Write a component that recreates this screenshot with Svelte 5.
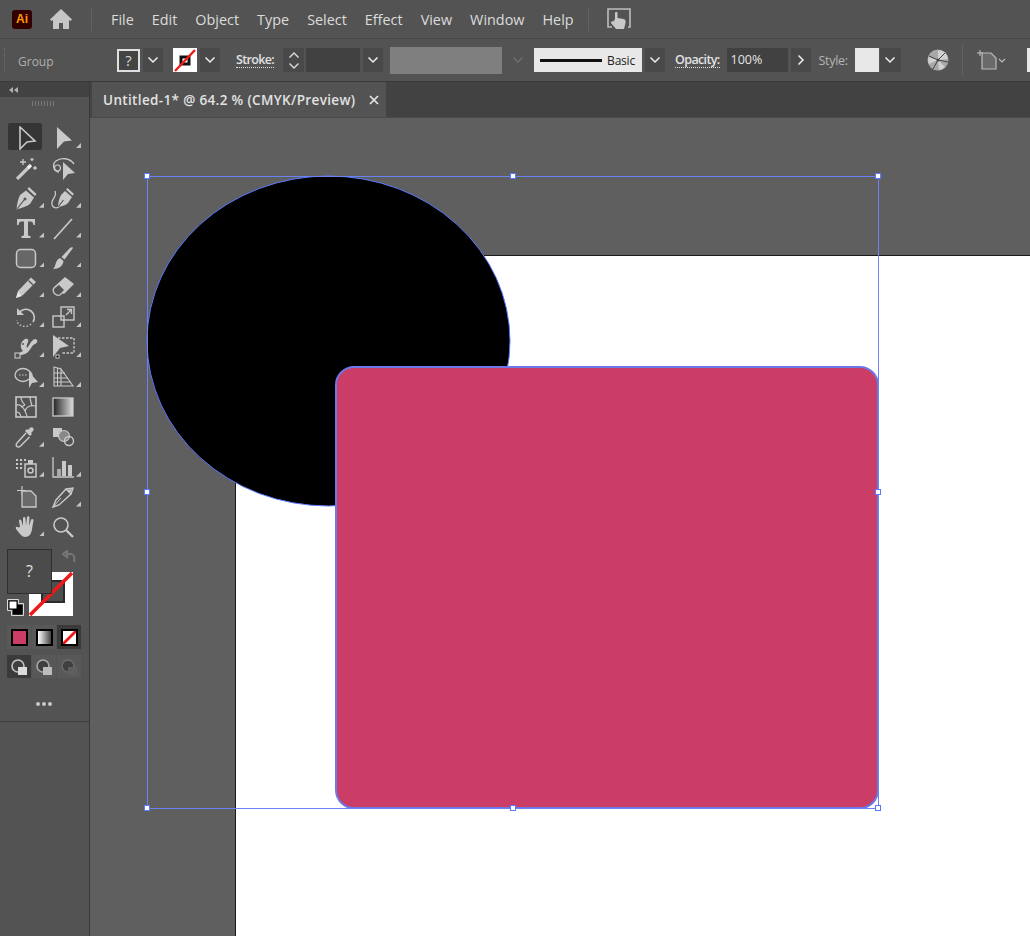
<script>
  const menus = ['File', 'Edit', 'Object', 'Type', 'Select', 'Effect', 'View', 'Window', 'Help'];

  // each tool is [svg body on a 24x24 box, has flyout corner]
  const tools = [
    ['<path d="M6 1 21 15 13 16 6 23Z" fill="none" stroke-width="1.6"/>', false],
    ['<path d="M6 1 21 14.500 13 15.500 6 23Z" fill="#c9c9c9" stroke="none"/>', true],
    ['<path d="M3 23 15 11" stroke-width="3.200"/><path d="M9 3v6M6 6h6M18 2v3M16.500 3.500h3M21 10v4M19 12h4" stroke-width="1.300"/><path d="M14 12l3-3" stroke-width="3.200" stroke="#f2f2f2"/>', false],
    ['<path d="M8 16C2 15 1 8 5 5c5-4 14-3 18 3" fill="none" stroke-width="1.400"/><circle cx="6.500" cy="12" r="3" fill="none" stroke-width="1.200"/><path d="M12 6 24 17 17 18 12 24Z" fill="#c9c9c9" stroke="none"/>', false],
    ['<path d="M12 4.500 20 11.500 16 18C12 21 7 22 2.500 23.500 3 18 4 13 6 9Z" fill="#c9c9c9" stroke="none"/><path d="M3 23 10 14" stroke="#535353" stroke-width="1.200"/><circle cx="11" cy="13" r="1.500" fill="#535353" stroke="none"/><path d="M13.500 3 15 1 22.500 8 21 10Z" fill="#c9c9c9" stroke="none"/>', true],
    ['<path d="M14 5 21 11 17 17C14 20 11 20 7 21 7 17 8 13 10 9Z" fill="#c9c9c9" stroke="none"/><path d="M7 21 12.500 14" stroke="#535353" stroke-width="1.100"/><path d="M15 3.500 16.500 2 23 8 21.500 9.500Z" fill="#c9c9c9" stroke="none"/><path d="M8 21C4 23 0 21 1 16 2 11 6 11 4 5" fill="none" stroke-width="1.300"/>', true],
    ['<path d="M3 3h18v6h-1.500c-.5-2.500-1-3.500-3-3.500H14v13c0 1 1 1.500 2.500 1.500v2h-9v-2C9 20 10 19.500 10 18.500v-13H7.500c-2 0-2.500 1-3 3.500H3Z" fill="#c9c9c9" stroke="none"/>', true],
    ['<path d="M3 23 21 3" stroke-width="1.700"/>', true],
    ['<rect x="2.500" y="3.500" width="19" height="18" rx="4" fill="#676767" stroke-width="1.500"/>', true],
    ['<path d="M22 2 13.500 13.500 10.500 11 19 2C20 1 22 1 22 2Z" fill="#c9c9c9" stroke="none"/><path d="M9 12 12.500 15C12 20 8 23 2 23 5 21 4 14 9 12Z" fill="#c9c9c9" stroke="none"/>', true],
    ['<path d="M17 2.500 22 7 9 20 2 23 4 16Z" fill="#c9c9c9" stroke="none"/><path d="M14.500 5.500l4.500 4.500" stroke="#535353" stroke-width="1.200"/><path d="M2 23l2-6 4 4z" fill="#e8e8e8" stroke="none"/>', true],
    ['<path d="M14 2 23 9 13 19 7 16 3 12Z" fill="#c9c9c9" stroke="none"/><path d="M3 13 8 9 14 15 9 20C7 21 5 20 3 18 2 16 2 14 3 13Z" fill="#535353" stroke="#c9c9c9" stroke-width="1.300"/>', true],
    ['<path d="M4 9C7 4 13 3 17 6c4 3 4 8 2 11" fill="none" stroke-width="1.600"/><path d="M3 3v7h7z" fill="#c9c9c9" stroke="none"/><path d="M17 19c-3 3-8 3-11 1-2-1-3-3-3-5" fill="none" stroke-width="1.400" stroke-dasharray="1.500 2"/>', true],
    ['<rect x="10" y="2" width="13" height="13" fill="none" stroke-width="1.400"/><rect x="2" y="11" width="11" height="11" fill="none" stroke-width="1.400"/><path d="M15 10l5-5M16 4.500h4.500V9" fill="none" stroke-width="1.300"/>', true],
    ['<path d="M3 21C6 17 7 17 9 16 5 12 7 6 11 4 13 3 15 4 14 7 13 9 12 12 13 13 16 10 17 5 21 4 24 4 24 8 21 9 18 10 17 14 14 17 11 20 6 20 3 21Z" fill="#c9c9c9" stroke="none"/><rect x="1" y="18" width="5" height="5" fill="#535353" stroke-width="1.100"/><circle cx="9" cy="9" r="1" fill="#535353" stroke="none"/>', true],
    ['<path d="M7 3h16v15H10" fill="none" stroke-width="1.300" stroke-dasharray="2.500 1.500"/><path d="M2 0 18 11 9 13 2 22Z" fill="#c9c9c9" stroke="none"/><rect x="5" y="20" width="3" height="3" stroke-width="1"/>', true],
    ['<ellipse cx="9" cy="10" rx="8" ry="6.500" fill="none" stroke-width="1.300"/><path d="M15 6a6 6 0 0 1 3 6" fill="none" stroke-width="1.300"/><path d="M5 10h8" stroke-width="1.200" stroke-dasharray="1.500 1.500"/><path d="M15 7 24 17 18 18 15 23Z" fill="#c9c9c9" stroke="none"/>', true],
    ['<path d="M3 2 10 4V21H3ZM10 4 22 21H10Z" fill="none" stroke-width="1.100"/><path d="M3 8h11M3 13h14M3 17h17M6.500 3v18" fill="none" stroke-width="1"/>', true],
    ['<rect x="2" y="2" width="20" height="20" fill="none" stroke-width="1.600"/><path d="M2 10c5-1 7 2 9 6s2 5 2 6M11 16c1-4 4-6 11-5M7 2c0 4 2 6 4 8M16 2c0 3 1 5 2 9M2 17c3 0 4 1 5 5M11 10c-2 1-3 2-4 2" fill="none" stroke-width="1.200"/>', false],
    ['<rect x="2" y="3" width="20" height="18" fill="url(#grad)" stroke-width="1.300"/>', false],
    ['<path d="M16 3c2-2 5 1 3 3l-2 2 1 1-2 2-5-5 2-2 1 1Z" fill="#c9c9c9" stroke="none"/><path d="M12 8 3 18c-1 1-1 3 0 3.500 1 1 2.500.5 3.500-.5l9-9" fill="none" stroke-width="1.500"/>', true],
    ['<rect x="2" y="3" width="9" height="9" fill="#c9c9c9" stroke="none"/><circle cx="13" cy="11" r="5.500" fill="#888" stroke-width="1.200"/><circle cx="18" cy="16" r="4.500" fill="none" stroke-width="1.400"/>', false],
    ['<path d="M2 5h2M6 5h2M10 5h2M2 9h2M6 9h2M2 13h2M6 13h2" stroke-width="2"/><rect x="11" y="9" width="11" height="13" fill="none" stroke-width="1.500"/><rect x="14" y="5" width="5" height="4" fill="#c9c9c9" stroke="none"/><circle cx="16.500" cy="15.500" r="2.500" fill="none" stroke-width="1.500"/>', true],
    ['<path d="M2 2v20h21" fill="none" stroke-width="1.300"/><rect x="6" y="14" width="4" height="7" fill="#aaa" stroke="none"/><rect x="11" y="6" width="4" height="15" fill="#c9c9c9" stroke="none"/><rect x="17" y="10" width="4" height="11" fill="#c9c9c9" stroke="none"/>', true],
    ['<path d="M8 1v9M3 5.500h9" stroke-width="1.200"/><path d="M8 6h9l5 5v11H8Z" fill="#6a6a6a" stroke-width="1.300"/>', false],
    ['<path d="M15 4 22 3 20 9 8 20 2 22 5 15Z" fill="none" stroke-width="1.400"/><path d="M15 4l5 5" stroke-width="1.400"/><path d="M2 22l8-9" stroke-width="1"/><path d="M16 5 21 4 19 8Z" fill="#c9c9c9" stroke="none"/>', true],
    ['<path d="M6 12 5 6c0-2 2-2 2.500 0L9 11 9 3.500c0-2 2.500-2 2.500 0L12 10.500l1-8c.3-2 2.500-1.500 2.500 0L15 11l2-6c.5-2 3-1 2.500.5L18 14c-.5 4-2 8-7 8-3 0-5-3-9-8-1-2 1-3 2.500-1.500Z" fill="#c9c9c9" stroke="none"/>', true],
    ['<circle cx="10" cy="10" r="7" fill="none" stroke-width="1.600"/><path d="M15 15 22 22" stroke-width="2.400"/>', false]
  ];

  const handles = [
    [147, 176], [513, 176], [878, 176],
    [147, 492], [878, 492],
    [147, 808], [513, 808], [878, 808]
  ];
</script>

<div class="app">
  <header class="menubar">
    <span class="logo">Ai</span>
    <svg class="home" viewBox="0 0 24 22" width="24" height="22" aria-hidden="true">
      <path d="M12 1 1 11.500 2.500 13 4 12v9h6v-6h4v6h6v-9l1.500 1 1.500-1.500Z" fill="#c6c6c6" />
    </svg>
    <span class="sep first"></span>
    <nav class="menus">
      {#each menus as m}
        <span>{m}</span>
      {/each}
    </nav>
    <span class="sep"></span>
    <svg class="touch" viewBox="0 0 24 22" width="24" height="22" aria-hidden="true">
      <path d="M5 19H1V1h22v18h-2" fill="none" stroke="#bdbdbd" stroke-width="1.600" />
      <path d="M8 11V5c0-1.500 2.500-1.500 2.500 0v5l6 1c2 .5 2.500 2 2 4l-1.500 6H9l-5-6c-.5-1 1-2.500 2.500-1.500Z" fill="#c9c9c9" />
    </svg>
  </header>

  <div class="controlbar">
    <span class="grip"></span>
    <span class="group">Group</span>
    <span class="fillq">?</span>
    <button class="chev">{@render chevron()}</button>
    <span class="strokeswatch">
      <svg viewBox="0 0 24 24" width="24" height="24" aria-hidden="true">
        <rect x="8" y="9" width="8" height="7" fill="none" stroke="#111" stroke-width="3" />
        <path d="M2 23 22 2" stroke="#f01818" stroke-width="2.400" />
      </svg>
    </span>
    <button class="chev">{@render chevron()}</button>
    <span class="lbl stroke-lbl">Stroke:</span>
    <span class="stepper">
      <svg viewBox="0 0 12 8" width="12" height="8" aria-hidden="true"><path d="M1.500 6.500 6 2l4.500 4.500" fill="none" stroke="#ddd" stroke-width="1.400" /></svg>
      <svg viewBox="0 0 12 8" width="12" height="8" aria-hidden="true"><path d="M1.500 1.500 6 6l4.500-4.500" fill="none" stroke="#ddd" stroke-width="1.400" /></svg>
    </span>
    <span class="input strokeinput"></span>
    <button class="chev">{@render chevron()}</button>
    <span class="greybox"></span>
    <span class="dimchev">
      <svg viewBox="0 0 12 8" width="12" height="8" aria-hidden="true"><path d="M1.500 1.500 6 6l4.500-4.500" fill="none" stroke="#6e6e6e" stroke-width="1.400" /></svg>
    </span>
    <span class="basic"><i></i><b>Basic</b></span>
    <button class="chev">{@render chevron()}</button>
    <span class="lbl opacity-lbl">Opacity:</span>
    <span class="input opacityinput">100%</span>
    <button class="chev next">
      <svg viewBox="0 0 8 12" width="8" height="12" aria-hidden="true"><path d="M1.500 1.500 6 6l-4.500 4.500" fill="none" stroke="#eee" stroke-width="1.500" /></svg>
    </button>
    <span class="style-lbl">Style:</span>
    <span class="styleswatch"></span>
    <button class="chev stylechev">{@render chevron()}</button>
    <svg class="recolor" viewBox="0 0 22 22" width="22" height="22" aria-hidden="true">
      <circle cx="11" cy="11" r="10.500" fill="#a8a8a8" />
      <path d="M11 11 11 1A10 10 0 0 1 21 10ZM11 11 18 18A10 10 0 0 1 12 21ZM11 11 2 15A10 10 0 0 1 1.500 8Z" fill="#d0d0d0" />
      <path d="M11 11 18 4M11 11 21 13M11 11 6 20M11 11 2 7" stroke="#444" stroke-width="1" />
      <circle cx="11" cy="11" r="1.500" fill="#444" />
    </svg>
    <span class="sep tall"></span>
    <svg class="doc" viewBox="0 0 30 20" width="30" height="20" aria-hidden="true">
      <path d="M3 0v6M0 3h6" stroke="#c4c4c4" stroke-width="1" />
      <path d="M5 3h9l5 5v11H5Z" fill="#6a6a6a" stroke="#bcbcbc" stroke-width="1.200" />
      <path d="M22 9l3 3 3-3" fill="none" stroke="#bcbcbc" stroke-width="1.100" />
    </svg>
    <span class="edgebox"></span>
  </div>

  <div class="workspace">
    <aside class="toolbar">
      <div class="collapse">
        <svg viewBox="0 0 9 6" width="9" height="6" aria-hidden="true"><path d="M4 0v6L0 3ZM9 0v6L5 3Z" fill="#b0b0b0" /></svg>
      </div>
      <div class="dragdots"></div>
      <div class="tools">
        {#each tools as [body, corner], i}
          <div class="tool" class:active={i === 0}>
            <svg viewBox="0 0 24 24" width="24" height="24" stroke="#c9c9c9" aria-hidden="true">
              {#if i === 19}
                <defs>
                  <linearGradient id="grad"><stop offset="0" stop-color="#222" /><stop offset="1" stop-color="#ddd" /></linearGradient>
                </defs>
              {/if}
              {@html body}
            </svg>
            {#if corner}<span class="corner"></span>{/if}
          </div>
        {/each}
      </div>

      <div class="swatches">
        <svg class="swap" viewBox="0 0 14 14" width="14" height="14" aria-hidden="true">
          <path d="M1 4 5 1v6ZM5 4h4c3 0 4 3 3 8" fill="none" stroke="#767676" stroke-width="2" />
        </svg>
        <div class="strokebox">
          <span class="hole"></span>
          <svg viewBox="0 0 44 44" width="44" height="44" aria-hidden="true"><path d="M1 43 43 1" stroke="#f01818" stroke-width="3.500" /></svg>
        </div>
        <div class="fillbox">?</div>
        <svg class="defaults" viewBox="0 0 17 17" width="17" height="17" aria-hidden="true">
          <path d="M.5.5h11v4h5v12h-12v-5h-4Z" fill="none" stroke="#dcdcdc" />
          <rect x="6" y="6" width="9.500" height="9.500" fill="#000" />
          <rect x="2" y="2" width="8" height="8" fill="#fff" stroke="#000" />
        </svg>
      </div>

      <div class="modes">
        <span class="mode"><i class="solid"></i></span>
        <span class="mode"><i class="gradient"></i></span>
        <span class="mode on">
          <i class="none">
            <svg viewBox="0 0 13 13" width="13" height="13" aria-hidden="true"><path d="M0 13 13 0" stroke="#f01818" stroke-width="2.800" /></svg>
          </i>
        </span>
      </div>

      <div class="drawmodes">
        <span class="draw on">{@render drawicon('#c4c4c4', '#dcdcdc')}</span>
        <span class="draw">{@render drawicon('#a8a8a8', '#bcbcbc')}</span>
        <span class="draw">{@render drawicon('#6a6a6a', '#5e5e5e')}</span>
      </div>

      <div class="more"><i></i><i></i><i></i></div>
      <div class="rule"></div>
    </aside>

    <main class="document">
      <div class="tabs">
        <div class="tab">
          <span>Untitled-1* @ 64.2 % (CMYK/Preview)</span>
          <svg viewBox="0 0 10 10" width="10" height="10" aria-hidden="true"><path d="M1 1 9 9M9 1 1 9" stroke="#e6e6e6" stroke-width="1.700" /></svg>
        </div>
      </div>
      <div class="canvas">
        <svg viewBox="90 118 940 818" width="940" height="818" aria-hidden="true">
          <rect x="235.500" y="255.500" width="900" height="800" fill="#fff" stroke="#1a1a1a" />
          <ellipse cx="328.500" cy="341" rx="181.500" ry="165" fill="#000" stroke="#5a78ff" stroke-width="1" />
          <rect x="336" y="367" width="542" height="441" rx="18" fill="#cb3c66" stroke="#6b78e6" stroke-width="2" />
          <rect x="147.500" y="176.500" width="731" height="632" fill="none" stroke="#6a82f5" stroke-width="1" />
          {#each handles as [x, y]}
            <rect x={x - 2.5} y={y - 2.5} width="5" height="5" fill="#fff" stroke="#5a78ff" stroke-width="1" />
          {/each}
        </svg>
      </div>
    </main>
  </div>
</div>

{#snippet chevron()}
  <svg viewBox="0 0 12 8" width="12" height="8" aria-hidden="true"><path d="M1.500 1.500 6 6l4.500-4.500" fill="none" stroke="#eee" stroke-width="1.500" /></svg>
{/snippet}

{#snippet drawicon(ring, square)}
  <svg viewBox="0 0 18 18" width="18" height="18" aria-hidden="true">
    <circle cx="8" cy="8" r="6" fill="#3f3f3f" stroke={ring} stroke-width="1.600" />
    <rect x="8" y="9" width="9" height="8" fill={square} />
  </svg>
{/snippet}

<style>
  :global(body) {
    background: #535353;
  }

  .app {
    width: 1030px;
    height: 936px;
    overflow: hidden;
    display: flex;
    flex-direction: column;
    background: #535353;
    font-family: "Open Sans", "Noto Sans", sans-serif;
    color: #d8d8d8;
  }

  .menubar {
    height: 38px;
    flex: none;
    display: flex;
    align-items: center;
    padding-left: 12px;
    border-bottom: 1px solid #464646;
    box-sizing: content-box;
  }

  .logo {
    width: 20px;
    height: 19px;
    border-radius: 3px;
    background: #330000;
    color: #ff9a00;
    font-size: 12px;
    font-weight: 700;
    line-height: 19px;
    text-align: center;
    font-family: "Liberation Sans", sans-serif;
  }

  .home {
    margin-left: 17px;
  }

  .sep {
    width: 1px;
    height: 24px;
    background: #626262;
    margin: 0 18px 0 14px;
  }

  .sep.first {
    margin-left: 18px;
    margin-right: 19px;
  }

  .menus {
    display: flex;
    gap: 18px;
    font-size: 14.400px;
    color: #dcdcdc;
  }

  .controlbar {
    height: 42px;
    flex: none;
    display: flex;
    align-items: center;
    position: relative;
    border-bottom: 1px solid #3a3a3a;
    font-size: 12px;
  }

  .grip {
    width: 2px;
    height: 24px;
    margin-left: 4px;
    border-left: 1px dotted #6d6d6d;
  }

  .group {
    margin-left: 11px;
    width: 99px;
    padding-top: 2px;
    font-size: 12px;
    color: #b0b0b0;
  }

  .fillq {
    width: 19px;
    height: 19px;
    border: 2px solid #e0e0e0;
    background: #444;
    color: #d8d8d8;
    font-size: 15px;
    line-height: 19px;
    text-align: center;
  }

  .chev {
    width: 20px;
    height: 24px;
    margin: 0 0 0 3px;
    padding: 0;
    border: 0;
    background: #494949;
    display: flex;
    align-items: center;
    justify-content: center;
  }

  .strokeswatch {
    width: 24px;
    height: 24px;
    margin-left: 10px;
    background: #fff;
  }

  .strokeswatch svg {
    display: block;
  }

  .lbl {
    font-size: 12.500px;
    font-weight: 600;
    letter-spacing: -0.65px;
    color: #e2e2e2;
    border-bottom: 1px dotted #e2e2e2;
    line-height: 15px;
  }

  .stroke-lbl {
    margin-left: 16px;
  }

  .stepper {
    width: 21px;
    height: 24px;
    margin-left: 9px;
    background: #494949;
    display: flex;
    flex-direction: column;
    align-items: center;
    justify-content: center;
    gap: 3px;
  }

  .input {
    height: 24px;
    background: #414141;
    margin-left: 2px;
    line-height: 24px;
  }

  .strokeinput {
    width: 54px;
  }

  .greybox {
    width: 112px;
    height: 27px;
    margin-left: 7px;
    background: #7f7f7f;
  }

  .dimchev {
    width: 32px;
    display: flex;
    justify-content: center;
  }

  .basic {
    width: 108px;
    height: 24px;
    background: #e8e8e8;
    display: flex;
    align-items: center;
    color: #222;
  }

  .basic i {
    width: 62px;
    height: 3px;
    margin-left: 6px;
    background: #111;
  }

  .basic b {
    font-weight: 400;
    font-size: 12px;
    letter-spacing: -0.2px;
    margin-left: 5px;
  }

  .opacity-lbl {
    margin-left: 10px;
  }

  .opacityinput {
    width: 57px;
    margin-left: 7px;
    padding-left: 4px;
    color: #e4e4e4;
    font-size: 12.500px;
  }

  .next {
    margin-left: 3px;
  }

  .style-lbl {
    margin-left: 8px;
    color: #b4b4b4;
    font-size: 12.500px;
    letter-spacing: -0.3px;
  }

  .styleswatch {
    width: 24px;
    height: 24px;
    margin-left: 7px;
    background: #e8e8e8;
  }

  .stylechev {
    margin-left: 1px;
    width: 21px;
  }

  .recolor {
    margin-left: 26px;
  }

  .sep.tall {
    height: 30px;
    margin: 0 0 0 13px;
  }

  .doc {
    margin-left: 14px;
  }

  .edgebox {
    width: 3px;
    height: 24px;
    margin-left: 20px;
    background: #e8e8e8;
  }

  .workspace {
    flex: 1;
    min-height: 0;
    display: flex;
  }

  .toolbar {
    width: 89px;
    flex: none;
    border-right: 1px solid #3a3a3a;
    background: #535353;
    position: relative;
  }

  .collapse {
    height: 15px;
    background: #424242;
    display: flex;
    align-items: center;
    padding-left: 9px;
  }

  .dragdots {
    width: 24px;
    height: 5px;
    margin: 4px 0 0 32px;
    background: repeating-linear-gradient(90deg, #7a7a7a 0 1px, transparent 1px 3px);
  }

  .tools {
    margin-top: 17px;
    padding-left: 8px;
    display: grid;
    grid-template-columns: 36px 36px;
    grid-auto-rows: 29.900px;
    column-gap: 1px;
  }

  .tool {
    position: relative;
    display: flex;
    align-items: center;
    justify-content: center;
  }

  .tool.active::before {
    content: "";
    position: absolute;
    left: 0;
    top: 0;
    width: 34px;
    height: 27px;
    border-radius: 2px;
    background: #353535;
  }

  .tool svg {
    position: relative;
  }

  .corner {
    position: absolute;
    right: 0;
    bottom: 5px;
    width: 5px;
    height: 5px;
    background: #c4c4c4;
    clip-path: polygon(100% 0, 100% 100%, 0 100%);
  }

  .swatches {
    height: 72px;
    margin-top: 5px;
    position: relative;
  }

  .fillbox {
    position: absolute;
    left: 7px;
    top: 3px;
    width: 43px;
    height: 43px;
    border: 1px solid #2f2f2f;
    background: #4b4b4b;
    color: #e0e0e0;
    font-size: 16px;
    line-height: 43px;
    text-align: center;
  }

  .strokebox {
    position: absolute;
    left: 29px;
    top: 26px;
    width: 44px;
    height: 44px;
    background: #fff;
  }

  .strokebox .hole {
    position: absolute;
    left: 12px;
    top: 8px;
    width: 20px;
    height: 19px;
    background: #4e4e4e;
    border: 2px solid #2b2b2b;
  }

  .strokebox svg {
    position: absolute;
    left: 0;
    top: 0;
  }

  .swap {
    position: absolute;
    left: 62px;
    top: 4px;
  }

  .defaults {
    position: absolute;
    left: 7px;
    top: 53px;
  }

  .modes {
    display: flex;
    margin: 7px 0 0 7px;
    gap: 1px;
  }

  .mode {
    width: 24px;
    height: 24px;
    display: flex;
    align-items: center;
    justify-content: center;
    background: #585858;
  }

  .mode.on {
    background: #3a3a3a;
  }

  .mode i {
    width: 13px;
    height: 13px;
    border: 2px solid #000;
    display: block;
    overflow: hidden;
  }

  .solid {
    background: #cb3c66;
  }

  .gradient {
    background: linear-gradient(90deg, #fff, #444);
  }

  .none {
    background: #fff;
  }

  .none svg {
    display: block;
  }

  .drawmodes {
    display: flex;
    margin: 6px 0 0 7px;
    gap: 1px;
  }

  .draw {
    width: 24px;
    height: 23px;
    display: flex;
    align-items: center;
    justify-content: center;
    background: #585858;
  }

  .draw.on {
    background: #3a3a3a;
  }

  .more {
    display: flex;
    justify-content: center;
    gap: 2px;
    margin-top: 24px;
    padding-right: 1px;
  }

  .more i {
    width: 4px;
    height: 4px;
    border-radius: 50%;
    background: #c8c8c8;
  }

  .rule {
    height: 1px;
    margin-top: 15px;
    background: #3e3e3e;
  }

  .document {
    flex: 1;
    min-width: 0;
    display: flex;
    flex-direction: column;
    border-left: 2px solid #444;
  }

  .tabs {
    height: 35px;
    flex: none;
    background: #424242;
    border-bottom: 1px solid #4a4a4a;
    display: flex;
  }

  .tab {
    width: 294px;
    box-sizing: border-box;
    background: #535353;
    display: flex;
    align-items: center;
    justify-content: space-between;
    padding: 0 7px 0 11px;
    font-size: 13.500px;
    letter-spacing: 0.35px;
    font-weight: 600;
    color: #e2e2e2;
  }

  .canvas {
    flex: 1;
    min-height: 0;
    background: #5f5f5f;
    margin-left: -2px;
  }

  .canvas svg {
    display: block;
  }
</style>
